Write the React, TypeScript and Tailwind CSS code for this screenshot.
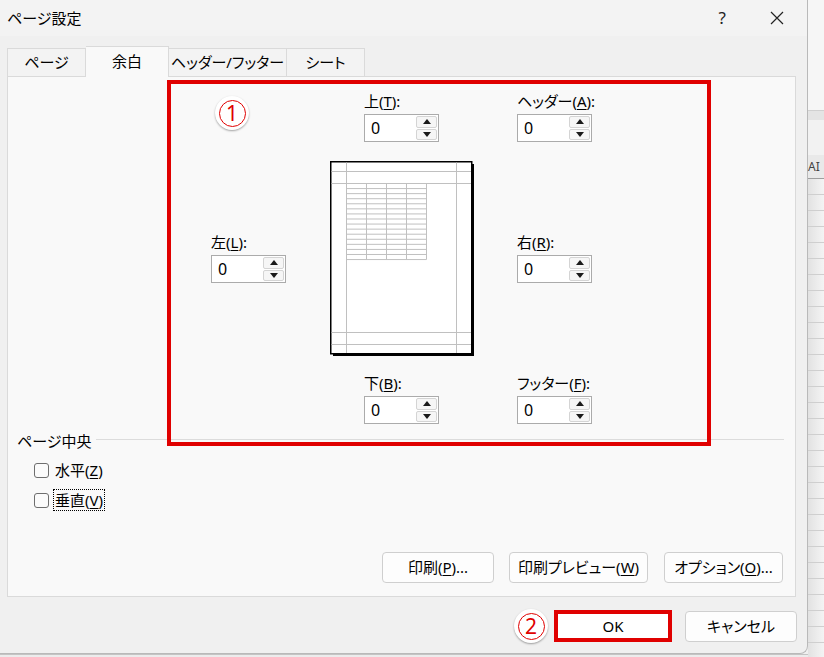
import React from "react";

const FONT = { fontFamily: '"Noto Sans", "Noto Sans CJK JP", sans-serif' };

function Label({ pre, accel, post }: { pre: string; accel: string; post: string }) {
  return (
    <div className="h-[18px] text-[15px] leading-[18px] text-black whitespace-nowrap">
      {pre}
      <span className="underline underline-offset-2">{accel}</span>
      {post}
    </div>
  );
}

function Arrow({ up }: { up?: boolean }) {
  return (
    <svg width="8" height="5" viewBox="0 0 8 5">
      {up ? <path d="M0 5 L4 0 L8 5 Z" fill="#1a1a1a" /> : <path d="M0 0 L4 5 L8 0 Z" fill="#1a1a1a" />}
    </svg>
  );
}

function SpinBox() {
  return (
    <div className="flex h-[28px] w-[75px] border border-[#ababab] bg-white">
      <div className="flex-1 pl-[6px] text-[16px] leading-[26px] text-black">0</div>
      <div className="flex w-[22px] flex-col gap-[1px] py-[1px] pr-[1px]">
        <div className="flex flex-1 items-center justify-center rounded-[2px] border border-[#d4d4d4] bg-[#f6f6f6]">
          <Arrow up />
        </div>
        <div className="flex flex-1 items-center justify-center rounded-[2px] border border-[#d4d4d4] bg-[#f6f6f6]">
          <Arrow />
        </div>
      </div>
    </div>
  );
}

function Field({ pre, accel, post }: { pre: string; accel: string; post: string }) {
  return (
    <div className="flex flex-col gap-[4px]">
      <Label pre={pre} accel={accel} post={post} />
      <SpinBox />
    </div>
  );
}

function PagePreview() {
  const rows = Array.from({ length: 16 }, (_, i) => 22.5 + i * 5.07);
  const cols = [16.5, 36.5, 56.5, 76.5, 96.5];
  return (
    <svg width="145" height="196" viewBox="0 0 145 196">
      <rect x="3" y="3" width="141" height="192" fill="#000" />
      <rect x="0.75" y="0.75" width="141" height="192" fill="#fff" stroke="#000" strokeWidth="1.5" />
      <g stroke="#c0c0c0" strokeWidth="1">
        <line x1="16.5" y1="1.5" x2="16.5" y2="192" />
        <line x1="126.5" y1="1.5" x2="126.5" y2="192" />
        <line x1="1.5" y1="10.5" x2="141" y2="10.5" />
        <line x1="1.5" y1="22.5" x2="141" y2="22.5" />
        <line x1="1.5" y1="171.5" x2="141" y2="171.5" />
        <line x1="1.5" y1="183.5" x2="141" y2="183.5" />
        {rows.map((y) => (
          <line key={y} x1="16.5" y1={y} x2="96.5" y2={y} />
        ))}
        {cols.map((x) => (
          <line key={x} x1={x} y1="22.5" x2={x} y2="98.5" />
        ))}
      </g>
    </svg>
  );
}

function Circled({ n }: { n: string }) {
  return (
    <div className="flex h-[34px] w-[34px] items-center justify-center rounded-full bg-white shadow-[0_1px_2px_rgba(0,0,0,0.35)]">
      <div className="flex h-[27px] w-[27px] items-center justify-center rounded-full border-[1.5px] border-[#e00000] text-[21px] leading-none text-[#e00000]">
        {n}
      </div>
    </div>
  );
}

function Checkbox({ label, accel, focus }: { label: string; accel: string; focus?: boolean }) {
  return (
    <div className="flex h-[26px] items-center pl-[26px]">
      <div className="h-[15px] w-[15px] rounded-[3px] border border-[#6e6e6e] bg-[#fbfbfb]" />
      <span
        className={`ml-[4px] px-[1px] text-[15px] leading-[20px] text-black border ${
          focus ? "border-dotted border-black" : "border-transparent"
        }`}
      >
        {label}(<span className="underline underline-offset-2">{accel}</span>)
      </span>
    </div>
  );
}

function Btn({ w, children }: { w: string; children: React.ReactNode }) {
  return (
    <div
      className={`${w} flex h-[31px] items-center justify-center whitespace-nowrap rounded-[4px] border border-[#cfcfcf] bg-[#fdfdfd] text-[15px] text-black`}
    >
      {children}
    </div>
  );
}

const tabs = [
  { label: "ページ", w: "w-[79px]" },
  { label: "余白", w: "w-[83px]", active: true },
  { label: "ヘッダー/フッター", w: "w-[118px]" },
  { label: "シート", w: "w-[78px]" },
];

export default function App() {
  return (
    <div
      className="flex h-[657px] w-[824px] overflow-hidden bg-[#f0f0f0] [font-feature-settings:'palt']"
      style={FONT}
    >
      <div className="flex w-[808px] flex-col">
        {/* Dialog */}
        <div className="flex h-[654px] flex-col rounded-br-[8px] border-r border-b border-[#b9b9b9] bg-[#f0f0f0]">
          {/* Title bar */}
          <div className="flex h-[36px] items-center bg-[#f3f3f3] pl-[7px]">
            <span className="text-[15px] text-black">ページ設定</span>
            <span className="ml-auto mr-[44px] text-[17px] text-[#222]">?</span>
            <svg width="14" height="14" viewBox="0 0 14 14" className="mr-[23px]">
              <path d="M1 1 L13 13 M13 1 L1 13" stroke="#222" strokeWidth="1.2" />
            </svg>
          </div>

          {/* Tabs */}
          <div className="relative z-10 mt-[10px] -mb-px flex h-[31px] items-end pl-[7px]">
            {tabs.map((t) => (
              <div
                key={t.label}
                className={`${t.w} flex items-center justify-center whitespace-nowrap border-t border-r border-[#dadada] text-[15px] text-black first:border-l ${
                  t.active ? "h-[31px] bg-[#f9f9f9] pb-[2px]" : "h-[29px] bg-[#f3f3f3] border-b"
                }`}
              >
                {t.label}
              </div>
            ))}
          </div>

          {/* Panel */}
          <div className="relative ml-[7px] flex h-[521px] w-[789px] flex-col border border-[#dadada] bg-[#f9f9f9]">
            <div className="flex pl-[203px] pt-[15px]">
              <div className="w-[75px] pt-[141px]">
                <Field pre="左(" accel="L" post="):" />
              </div>
              <div className="ml-[44px] flex w-[142px] flex-col">
                <div className="pl-[34px]">
                  <Field pre="上(" accel="T" post="):" />
                </div>
                <div className="mt-[19px] h-[193px]">
                  <PagePreview />
                </div>
                <div className="mt-[20px] pl-[34px]">
                  <Field pre="下(" accel="B" post="):" />
                </div>
              </div>
              <div className="ml-[45px] flex flex-col">
                <Field pre="ヘッダー(" accel="A" post="):" />
                <div className="mt-[91px]">
                  <Field pre="右(" accel="R" post="):" />
                </div>
                <div className="mt-[91px]">
                  <Field pre="フッター(" accel="F" post="):" />
                </div>
              </div>
            </div>

            {/* Center on page */}
            <div className="mt-[8px] flex items-center pl-[9px] pr-[11px]">
              <span className="h-[18px] text-[15px] leading-[18px] text-black">ページ中央</span>
              <div className="mb-[4px] ml-[5px] h-px flex-1 bg-[#dcdcdc]" />
            </div>
            <div className="mt-[7px]">
              <Checkbox label="水平" accel="Z" />
            </div>
            <div className="mt-[4px]">
              <Checkbox label="垂直" accel="V" focus />
            </div>

            <div className="mt-auto flex justify-end gap-[15px] pb-[13px] pr-[12px]">
              <Btn w="w-[112px]">
                印刷(<span className="underline underline-offset-2">P</span>)...
              </Btn>
              <Btn w="w-[139px]">
                印刷プレビュー(<span className="underline underline-offset-2">W</span>)
              </Btn>
              <div className="ml-px">
                <Btn w="w-[119px]">
                  オプション(<span className="underline underline-offset-2">O</span>)...
                </Btn>
              </div>
            </div>

            {/* Annotation overlays */}
            <div className="pointer-events-none absolute left-[159px] top-[3px] h-[366px] w-[544px] border-4 border-[#e00000]" />
            <div className="absolute left-[207px] top-[19px]">
              <Circled n="1" />
            </div>
          </div>

          {/* Footer */}
          <div className="flex items-start justify-end pr-[10px] pt-[13px]">
            <div className="mr-[6px] mt-[-1px]">
              <Circled n="2" />
            </div>
            <div className="flex h-[32px] w-[118px] items-center justify-center border-4 border-[#e00000] bg-white text-[15px] text-black">
              OK
            </div>
            <div className="ml-[13px] mt-px flex h-[31px] w-[112px] items-center justify-center rounded-[4px] border border-[#cfcfcf] bg-[#fdfdfd] text-[15px] text-black">
              キャンセル
            </div>
          </div>
        </div>
        <div className="h-[3px] border-t border-[#c4c4c4] bg-[#ececec]" />
      </div>

      {/* Excel sheet behind the dialog */}
      <div className="flex w-[16px] flex-col">
        <div className="h-[110px] bg-[#f6f6f6]" />
        <div className="h-[10px] border-t border-[#d0d0d0] bg-[#e4e4e4]" />
        <div className="h-[35px] bg-[#f2f2f2]" />
        <div className="flex h-[24px] items-center border-b border-[#9e9e9e] bg-[#e9e9e9] text-[12px] text-[#444]">
          AI
        </div>
        <div className="flex-1 bg-[repeating-linear-gradient(to_bottom,transparent_0px,transparent_15px,#cfcfcf_15px,#cfcfcf_16px),linear-gradient(to_right,#e2e2e2,#f4f4f4)]" />
      </div>
    </div>
  );
}
